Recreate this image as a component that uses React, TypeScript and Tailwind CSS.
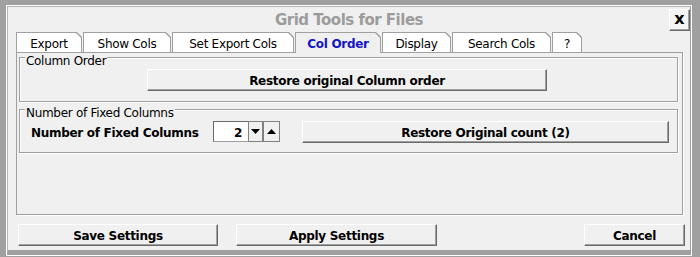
import React from "react";

const tabs = [
  { label: "Export", w: "w-[66px]" },
  { label: "Show Cols", w: "w-[88px]" },
  { label: "Set Export Cols", w: "w-[122px]" },
  { label: "Col Order", w: "w-[86px]", active: true },
  { label: "Display", w: "w-[69px]" },
  { label: "Search Cols", w: "w-[99px]" },
  { label: "?", w: "w-[30px]" },
];

const clip = "[clip-path:polygon(0_0,calc(100%_-_5px)_0,100%_5px,100%_100%,0_100%)]";

function Btn({ className = "", children }: { className?: string; children: React.ReactNode }) {
  return (
    <button
      className={`flex items-center justify-center pt-[2px] bg-[#f0f0f0] border-t border-l border-t-white border-l-white border-r border-b border-r-[#696969] border-b-[#696969] shadow-[inset_-1px_-1px_0_#a0a0a0] font-bold text-[12px] leading-[14px] text-black ${className}`}
    >
      {children}
    </button>
  );
}

function Group({ label, className = "", children }: { label: string; className?: string; children: React.ReactNode }) {
  return (
    <div className={`border border-[#a0a0a0] shadow-[1px_1px_0_#fff,inset_1px_1px_0_#fff] ${className}`}>
      <div className="-mt-[4px] ml-[5px] w-fit px-px bg-[#f0f0f0] text-[12px] leading-[14px] text-black">{label}</div>
      {children}
    </div>
  );
}

export default function App() {
  return (
    <div className="w-[700px] h-[257px] bg-[#a0a0a0] pt-[5px] pl-[6px] pr-[8px] pb-px font-['DejaVu_Sans',sans-serif] tracking-[-0.3px] text-black">
      <div className="h-full border border-white">
        <div className="h-full flex flex-col bg-[#f0f0f0] border-t border-l border-t-[#b4b4b4] border-l-[#b4b4b4] border-r border-r-[#a0a0a0] border-b-[5px] border-b-[#a0a0a0]">
          {/* Title row */}
          <div className="h-[25px] grid grid-cols-[21px_1fr_21px] items-start">
            <div />
            <div className="pt-[4px] text-center text-[15px] leading-[18px] font-bold text-[#9c9c9c] tracking-[-0.5px]">
              Grid Tools for Files
            </div>
            <button className="mt-[2px] h-[22px] w-[21px] flex items-center justify-center bg-[#f4f4f4] border-t border-l border-t-white border-l-white border-r border-b border-r-[#696969] border-b-[#696969] shadow-[inset_-1px_-1px_0_#a0a0a0] text-[16px] font-bold leading-[16px] pb-[2px] tracking-normal">
              x
            </button>
          </div>

          {/* Tabs */}
          <div className="relative z-10 flex items-start gap-px ml-[8px] h-[21px] -mb-px">
            {tabs.map((t) => (
              <div
                key={t.label}
                className={`${t.w} ${t.active ? "h-[21px]" : "h-[20px]"} bg-[#a0a0a0] pt-px px-px ${clip}`}
              >
                <div
                  className={`h-full flex items-center justify-center pt-[3px] text-[12px] leading-[14px] ${clip} ${
                    t.active ? "bg-[#f0f0f0] font-bold text-[#1414c8] pb-px" : "bg-white"
                  }`}
                >
                  {t.label}
                </div>
              </div>
            ))}
          </div>

          {/* Panel */}
          <div className="ml-[8px] mr-[7px] h-[163px] border border-[#a0a0a0] shadow-[1px_1px_0_#fff] pt-[4px] pl-[2px] pr-[4px]">
            <Group label="Column Order" className="h-[45px]">
              <Btn className="mt-px ml-[127px] w-[400px] h-[22px]">Restore original Column order</Btn>
            </Group>
            <Group label="Number of Fixed Columns" className="mt-[7px] h-[44px]">
              <div className="mt-px flex items-center h-[22px]">
                <div className="ml-[11px] w-[182px] pt-[2px] text-[12px] leading-[14px] font-bold">Number of Fixed Columns</div>
                <div className="flex h-[21px] self-start">
                  <div className="w-[35px] h-full bg-white border-t border-l border-t-[#696969] border-l-[#696969] border-b border-b-[#a0a0a0] flex items-center justify-end pr-[6px] pt-[2px] text-[12px] font-bold leading-[14px]">
                    2
                  </div>
                  <div className="w-[15px] h-full bg-[#f0f0f0] border border-[#808080] flex items-center justify-center">
                    <svg width="9" height="5" viewBox="0 0 9 5"><path d="M0 0H9L4.5 5Z" fill="#000" /></svg>
                  </div>
                  <div className="w-[17px] h-full bg-[#f0f0f0] border border-[#808080] flex items-center justify-center">
                    <svg width="9" height="5" viewBox="0 0 9 5"><path d="M0 5H9L4.5 0Z" fill="#000" /></svg>
                  </div>
                </div>
                <Btn className="ml-[22px] w-[367px] h-[22px]">Restore Original count (2)</Btn>
              </div>
            </Group>
          </div>

          {/* Bottom buttons */}
          <div className="mt-[9px] flex h-[22px]">
            <Btn className="ml-[10px] w-[200px] h-full">Save Settings</Btn>
            <Btn className="ml-[18px] w-[201px] h-full">Apply Settings</Btn>
            <Btn className="ml-auto mr-[5px] w-[101px] h-full">Cancel</Btn>
          </div>
        </div>
      </div>
    </div>
  );
}
